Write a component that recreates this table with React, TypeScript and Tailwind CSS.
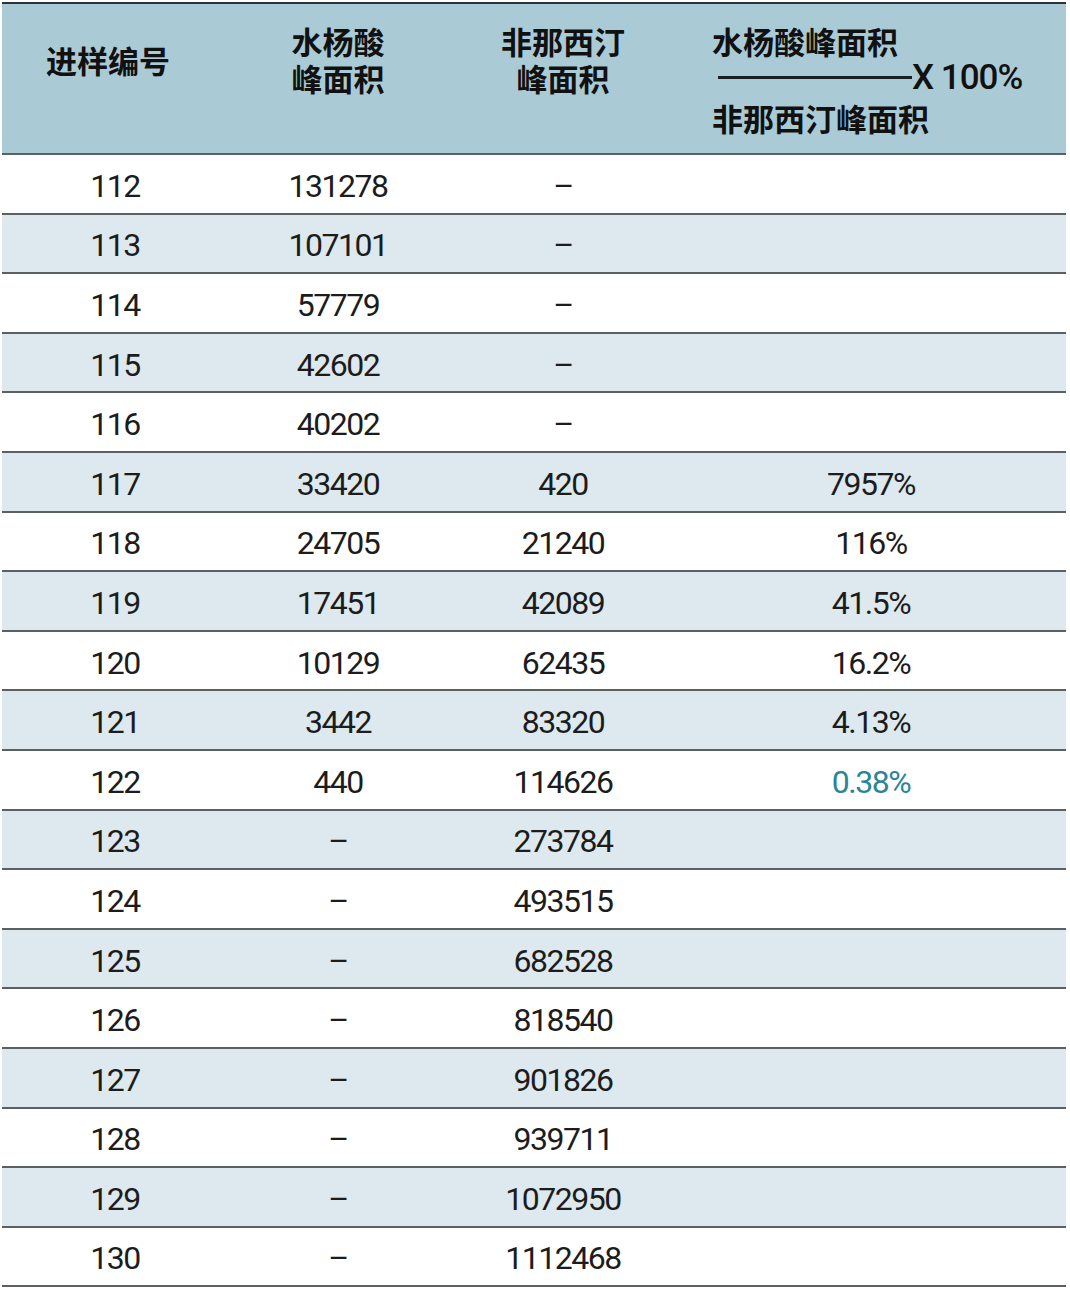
const rows: [string, string, string, string][] = [
  ["112", "131278", "–", ""],
  ["113", "107101", "–", ""],
  ["114", "57779", "–", ""],
  ["115", "42602", "–", ""],
  ["116", "40202", "–", ""],
  ["117", "33420", "420", "7957%"],
  ["118", "24705", "21240", "116%"],
  ["119", "17451", "42089", "41.5%"],
  ["120", "10129", "62435", "16.2%"],
  ["121", "3442", "83320", "4.13%"],
  ["122", "440", "114626", "0.38%"],
  ["123", "–", "273784", ""],
  ["124", "–", "493515", ""],
  ["125", "–", "682528", ""],
  ["126", "–", "818540", ""],
  ["127", "–", "901826", ""],
  ["128", "–", "939711", ""],
  ["129", "–", "1072950", ""],
  ["130", "–", "1112468", ""],
];

const cjk = { fontFamily: '"Noto Sans CJK SC", "Noto Sans", sans-serif' };
const num = { fontFamily: 'Roboto, "Liberation Sans", sans-serif' };

const App = () => {
  return (
    <div className="w-[1070px] min-h-[1289px] bg-white pt-[2px] pl-[2px]">
      <div className="w-[1064px]">
        {/* header */}
        <div
          className="grid grid-cols-[224px_224px_226px_390px] h-[153px] bg-[#aacbd6] border-t-2 border-[#2e3337] border-b-2 border-b-[#5b6063] text-[31px] font-bold leading-[37px] text-[#111]"
          style={cjk}
        >
          <div className="pt-[37px] pr-[12px] text-center">进样编号</div>
          <div className="pt-[18px] text-center">
            <div>水杨酸</div>
            <div>峰面积</div>
          </div>
          <div className="pt-[18px] text-center">
            <div>非那西汀</div>
            <div>峰面积</div>
          </div>
          <div className="pt-[18px] pl-[36px]">
            <div>水杨酸峰面积</div>
            <div className="flex items-center h-[37px] pl-[6px]">
              <span className="inline-block w-[194px] h-[3px] bg-[#1a1f22]" />
              <span className="font-medium text-[35px] tracking-[-1px]" style={num}>X 100%</span>
            </div>
            <div className="mt-[3px]">非那西汀峰面积</div>
          </div>
        </div>

        {/* body */}
        {rows.map((r, i) => (
          <div
            key={r[0]}
            className={`grid grid-cols-[224px_224px_226px_390px] h-[59.6px] items-center pt-[4px] border-b-2 border-[#5b6063] text-[32px] font-normal tracking-[-1.5px] text-[#1c1c1c] ${
              i % 2 === 1 ? "bg-[#dde9ee]" : "bg-white"
            }`}
            style={num}
          >
            <div className="text-center pl-[2px]">{r[0]}</div>
            <div className="text-center">{r[1]}</div>
            <div className="text-center">{r[2]}</div>
            <div className={`text-center ${r[0] === "122" ? "text-[#2b8597]" : ""}`}>{r[3]}</div>
          </div>
        ))}
      </div>
    </div>
  );
};

export default App;
